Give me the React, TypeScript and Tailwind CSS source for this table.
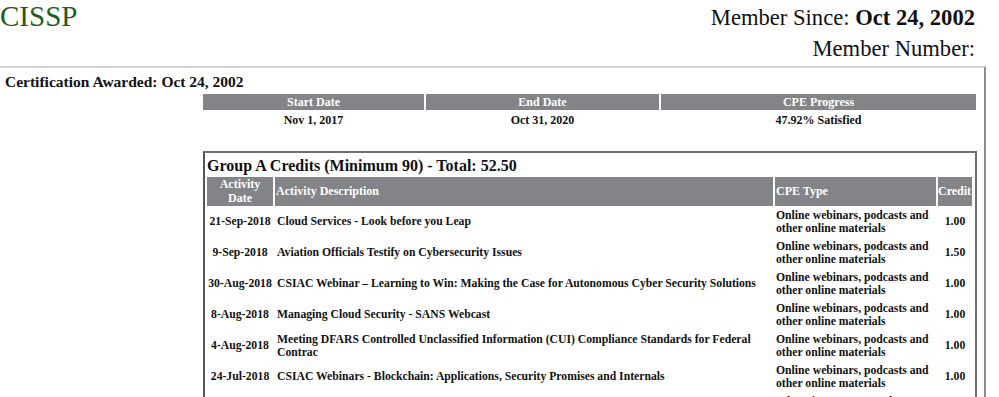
const credits = [
  { date: '21-Sep-2018', desc: 'Cloud Services - Look before you Leap', type: 'Online webinars, podcasts and other online materials', credit: '1.00' },
  { date: '9-Sep-2018', desc: 'Aviation Officials Testify on Cybersecurity Issues', type: 'Online webinars, podcasts and other online materials', credit: '1.50' },
  { date: '30-Aug-2018', desc: 'CSIAC Webinar – Learning to Win: Making the Case for Autonomous Cyber Security Solutions', type: 'Online webinars, podcasts and other online materials', credit: '1.00' },
  { date: '8-Aug-2018', desc: 'Managing Cloud Security - SANS Webcast', type: 'Online webinars, podcasts and other online materials', credit: '1.00' },
  { date: '4-Aug-2018', desc: 'Meeting DFARS Controlled Unclassified Information (CUI) Compliance Standards for Federal Contrac', type: 'Online webinars, podcasts and other online materials', credit: '1.00' },
  { date: '24-Jul-2018', desc: 'CSIAC Webinars - Blockchain: Applications, Security Promises and Internals', type: 'Online webinars, podcasts and other online materials', credit: '1.00' },
  { date: '3-Mar-2018', desc: "Fabian's Electronic Communications & Fabian's Cell Phone and Computer Income 3-3-18", type: 'Education Courses and Seminars', credit: '2.00' },
];

export default function App() {
  return (
    <div className="h-[397px] w-[999px] overflow-hidden bg-white font-['Liberation_Serif',serif] text-[#111]">
      {/* top header */}
      <div className="flex h-[66px] justify-between">
        <div className="pt-[1px] text-[29px] leading-[30px] text-[#1c5e1c]">CISSP</div>
        <div className="pr-[24px] text-right text-[22.6px] leading-[31px]">
          <div className="pt-[2px]">
            Member Since: <span className="font-bold">Oct 24, 2002</span>
          </div>
          <div>Member Number:</div>
        </div>
      </div>

      <div className="w-[986px] border-t-2 border-r-2 border-t-[#d4d4d4] border-r-[#8c8c8c] pb-6">
        <div className="pl-[5px] pt-[5px] text-[15.5px] font-bold leading-[18px]">
          Certification Awarded: Oct 24, 2002
        </div>

        {/* summary */}
        <table className="ml-[201px] mt-[3px] w-[777px] table-fixed border-separate border-spacing-x-[2px] border-spacing-y-0 text-[12px] font-bold">
          <colgroup>
            <col className="w-[221px]" />
            <col className="w-[233px]" />
            <col />
          </colgroup>
          <thead>
            <tr className="bg-[#828487] text-white">
              <th className="h-[16px] p-0 leading-[15px]">Start Date</th>
              <th className="p-0 leading-[15px]">End Date</th>
              <th className="p-0 leading-[15px]">CPE Progress</th>
            </tr>
          </thead>
          <tbody>
            <tr>
              <td className="p-0 pt-[3px] text-center leading-[14px]">Nov 1, 2017</td>
              <td className="p-0 pt-[3px] text-center leading-[14px]">Oct 31, 2020</td>
              <td className="p-0 pt-[3px] text-center leading-[14px]">47.92% Satisfied</td>
            </tr>
          </tbody>
        </table>

        {/* group A */}
        <div className="ml-[203px] mt-[24px] w-[774px] border-2 border-[#6e6e6e] border-l-[#555]">
          <div className="pl-[2px] pt-[3px] text-[16px] font-bold leading-[20px]">
            Group A Credits (Minimum 90) - Total: 52.50
          </div>
          <table className="w-[768px] table-fixed border-separate border-spacing-x-[2px] border-spacing-y-px text-[11.7px] font-bold leading-[13.5px]">
            <colgroup>
              <col className="w-[66px]" />
              <col className="w-[498px]" />
              <col className="w-[161px]" />
              <col className="w-[34px]" />
            </colgroup>
            <thead>
              <tr className="bg-[#828487] text-[12px] text-white">
                <th className="h-[29px] p-0 text-center">
                  Activity
                  <br />
                  Date
                </th>
                <th className="p-0 pl-[1px] text-left">Activity Description</th>
                <th className="p-0 pl-[1px] text-left">CPE Type</th>
                <th className="p-0 text-left">Credit</th>
              </tr>
            </thead>
            <tbody>
              {credits.map((c) => (
                <tr key={c.date}>
                  <td className="h-[30px] whitespace-nowrap p-0 text-center">{c.date}</td>
                  <td className="p-0 pl-[2px]">{c.desc}</td>
                  <td className="p-0 pl-[1px]">{c.type}</td>
                  <td className="p-0 text-center">{c.credit}</td>
                </tr>
              ))}
            </tbody>
          </table>
        </div>
      </div>
    </div>
  );
}
